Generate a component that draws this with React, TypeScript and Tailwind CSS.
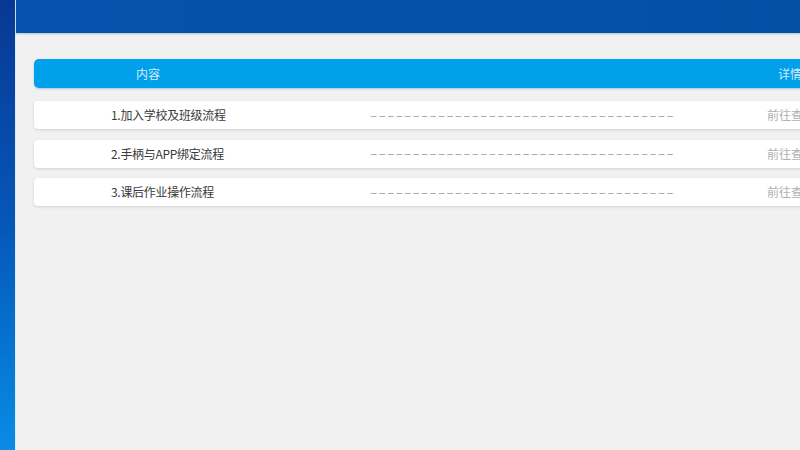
const rows = ["1.加入学校及班级流程", "2.手柄与APP绑定流程", "3.课后作业操作流程"];

const DASHES = "–".repeat(36);

export default function App() {
  return (
    <div
      className="flex h-[450px] w-[800px] overflow-hidden bg-[#f1f1f1]"
      style={{ fontFamily: '"Noto Sans CJK SC", "Noto Sans", sans-serif' }}
    >
      {/* left strip */}
      <div className="h-full w-[15px] shrink-0 bg-gradient-to-b from-[#083894] via-[#0657b8] to-[#0a8ce6]" />
      <div className="w-px shrink-0 bg-[#dfeaf6]" />

      <div className="flex min-w-0 flex-1 flex-col">
        {/* top bar */}
        <div className="h-[33px] shrink-0 bg-gradient-to-r from-[#0652ac] to-[#044fa6] shadow-[0_1px_2px_rgba(0,40,100,0.25)]" />

        {/* content */}
        <div className="flex-1 overflow-hidden pl-[18px] pt-[26px]">
          <div className="w-[820px]">
            <div className="flex h-[29px] items-center rounded-l-[5px] bg-[#00a0ea] text-[12px] text-[#d4ecfa] shadow-[0_1px_2px_rgba(0,100,180,0.3)]">
              <span className="pl-[102px]">内容</span>
              <span className="ml-auto mr-[52px]">详情</span>
            </div>

            <div className="mt-[13px] flex flex-col gap-[10.5px]">
              {rows.map((r) => (
                <div
                  key={r}
                  className="flex h-[28px] items-center rounded-l-[4px] bg-white shadow-[0_1px_3px_rgba(0,0,0,0.13)]"
                >
                  <span className="w-[337px] shrink-0 pl-[77px] text-[12px] tracking-[-0.3px] text-[#3a3a3a]">
                    {r}
                  </span>
                  <span
                    className="w-[396px] shrink-0 text-[10px] tracking-[2.9px] text-[#9a9a9a]"
                    style={{ fontFamily: '"Liberation Sans", sans-serif' }}
                  >
                    {DASHES}
                  </span>
                  <span className="text-[12px] text-[#b0b0b0]">前往查看</span>
                </div>
              ))}
            </div>
          </div>
        </div>
      </div>
    </div>
  );
}
